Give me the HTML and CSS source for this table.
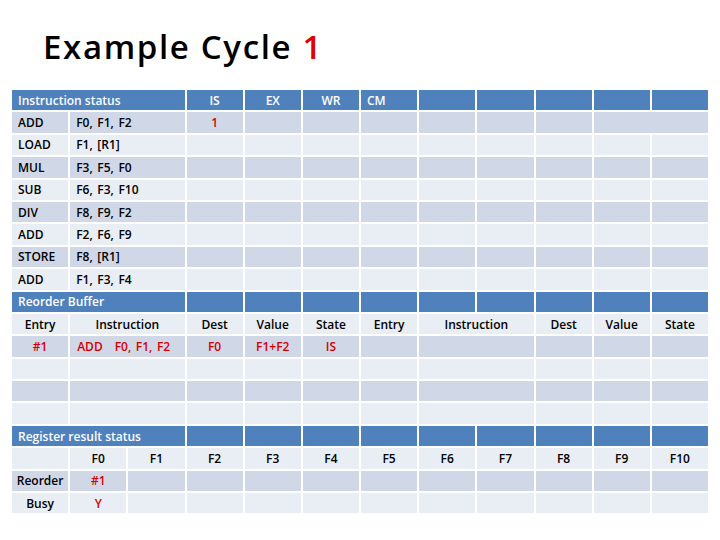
FILE: index.html
```html
<!DOCTYPE html>
<html>
<head>
<meta charset="utf-8">
<link rel="stylesheet" href="styles.css">
</head>
<body>
<div class="page">
  <h1 class="title">Example Cycle <span class="red-title">1</span></h1>
  <div class="grid">
    <!-- Instruction status header -->
    <div class="cell h s3">Instruction status</div>
    <div class="cell h c">IS</div>
    <div class="cell h c">EX</div>
    <div class="cell h c">WR</div>
    <div class="cell h">CM</div>
    <div class="cell h"></div><div class="cell h"></div><div class="cell h"></div><div class="cell h"></div><div class="cell h"></div>

    <!-- row 1 -->
    <div class="cell d">ADD</div><div class="cell d s2">F0, F1, F2</div>
    <div class="cell d c red">1</div><div class="cell d"></div><div class="cell d"></div><div class="cell d"></div>
    <div class="cell d"></div><div class="cell d"></div><div class="cell d"></div><div class="cell d s2"></div>

    <div class="cell l">LOAD</div><div class="cell l s2">F1, [R1]</div>
    <div class="cell l"></div><div class="cell l"></div><div class="cell l"></div><div class="cell l"></div>
    <div class="cell l"></div><div class="cell l"></div><div class="cell l"></div><div class="cell l"></div><div class="cell l"></div>

    <div class="cell d">MUL</div><div class="cell d s2">F3, F5, F0</div>
    <div class="cell d"></div><div class="cell d"></div><div class="cell d"></div><div class="cell d"></div>
    <div class="cell d"></div><div class="cell d"></div><div class="cell d"></div><div class="cell d"></div><div class="cell d"></div>

    <div class="cell l">SUB</div><div class="cell l s2">F6, F3, F10</div>
    <div class="cell l"></div><div class="cell l"></div><div class="cell l"></div><div class="cell l"></div>
    <div class="cell l"></div><div class="cell l"></div><div class="cell l"></div><div class="cell l"></div><div class="cell l"></div>

    <div class="cell d">DIV</div><div class="cell d s2">F8, F9, F2</div>
    <div class="cell d"></div><div class="cell d"></div><div class="cell d"></div><div class="cell d"></div>
    <div class="cell d"></div><div class="cell d"></div><div class="cell d"></div><div class="cell d"></div><div class="cell d"></div>

    <div class="cell l">ADD</div><div class="cell l s2">F2, F6, F9</div>
    <div class="cell l"></div><div class="cell l"></div><div class="cell l"></div><div class="cell l"></div>
    <div class="cell l"></div><div class="cell l"></div><div class="cell l"></div><div class="cell l"></div><div class="cell l"></div>

    <div class="cell d">STORE</div><div class="cell d s2">F8, [R1]</div>
    <div class="cell d"></div><div class="cell d"></div><div class="cell d"></div><div class="cell d"></div>
    <div class="cell d"></div><div class="cell d"></div><div class="cell d"></div><div class="cell d"></div><div class="cell d"></div>

    <div class="cell l">ADD</div><div class="cell l s2">F1, F3, F4</div>
    <div class="cell l"></div><div class="cell l"></div><div class="cell l"></div><div class="cell l"></div>
    <div class="cell l"></div><div class="cell l"></div><div class="cell l"></div><div class="cell l"></div><div class="cell l"></div>

    <!-- Reorder buffer -->
    <div class="cell h s3">Reorder Buffer</div>
    <div class="cell h"></div><div class="cell h"></div><div class="cell h"></div><div class="cell h"></div>
    <div class="cell h"></div><div class="cell h"></div><div class="cell h"></div><div class="cell h"></div><div class="cell h"></div>

    <div class="cell l c">Entry</div><div class="cell l c s2">Instruction</div>
    <div class="cell l c">Dest</div><div class="cell l c">Value</div><div class="cell l c">State</div>
    <div class="cell l c">Entry</div><div class="cell l c s2">Instruction</div>
    <div class="cell l c">Dest</div><div class="cell l c">Value</div><div class="cell l c">State</div>

    <div class="cell d c red">#1</div><div class="cell d s2 red rob-inst"><span class="op">ADD</span>F0, F1, F2</div>
    <div class="cell d c red">F0</div><div class="cell d c red">F1+F2</div><div class="cell d c red">IS</div>
    <div class="cell d"></div><div class="cell d s2"></div><div class="cell d"></div><div class="cell d"></div><div class="cell d"></div>

    <div class="cell l"></div><div class="cell l s2"></div><div class="cell l"></div><div class="cell l"></div><div class="cell l"></div>
    <div class="cell l"></div><div class="cell l s2"></div><div class="cell l"></div><div class="cell l"></div><div class="cell l"></div>

    <div class="cell d"></div><div class="cell d s2"></div><div class="cell d"></div><div class="cell d"></div><div class="cell d"></div>
    <div class="cell d"></div><div class="cell d s2"></div><div class="cell d"></div><div class="cell d"></div><div class="cell d"></div>

    <div class="cell l"></div><div class="cell l s2"></div><div class="cell l"></div><div class="cell l"></div><div class="cell l"></div>
    <div class="cell l"></div><div class="cell l s2"></div><div class="cell l"></div><div class="cell l"></div><div class="cell l"></div>

    <!-- Register result status -->
    <div class="cell h s3">Register result status</div>
    <div class="cell h"></div><div class="cell h"></div><div class="cell h"></div><div class="cell h"></div>
    <div class="cell h"></div><div class="cell h"></div><div class="cell h"></div><div class="cell h"></div><div class="cell h"></div>

    <div class="cell l"></div>
    <div class="cell l c">F0</div><div class="cell l c">F1</div><div class="cell l c">F2</div><div class="cell l c">F3</div>
    <div class="cell l c">F4</div><div class="cell l c">F5</div><div class="cell l c">F6</div><div class="cell l c">F7</div>
    <div class="cell l c">F8</div><div class="cell l c">F9</div><div class="cell l c">F10</div>

    <div class="cell d c">Reorder</div><div class="cell d c red">#1</div>
    <div class="cell d"></div><div class="cell d"></div><div class="cell d"></div><div class="cell d"></div><div class="cell d"></div>
    <div class="cell d"></div><div class="cell d"></div><div class="cell d"></div><div class="cell d"></div><div class="cell d"></div>

    <div class="cell l c">Busy</div><div class="cell l c red">Y</div>
    <div class="cell l"></div><div class="cell l"></div><div class="cell l"></div><div class="cell l"></div><div class="cell l"></div>
    <div class="cell l"></div><div class="cell l"></div><div class="cell l"></div><div class="cell l"></div><div class="cell l"></div>
  </div>
</div>
</body>
</html>
```

FILE: styles.css
```css
html, body {
  margin: 0;
  padding: 0;
  background: #ffffff;
}

.page {
  width: 720px;
  height: 540px;
  padding: 22px 12px 0 12px;
  box-sizing: border-box;
  font-family: "Open Sans", "Noto Sans", sans-serif;
}

.title {
  margin: 0 0 0 31px;
  height: 68px;
  font-size: 33px;
  font-weight: 600;
  line-height: 50px;
  color: #000000;
  letter-spacing: 1.65px;
}

.red-title {
  color: #e00000;
}

.grid {
  display: grid;
  grid-template-columns: repeat(12, 1fr);
  grid-auto-rows: 20.4px;
  gap: 2px;
  width: 696px;
}

.cell {
  display: flex;
  align-items: center;
  padding: 0 6px;
  font-size: 12px;
  font-weight: 600;
  color: #000000;
  white-space: nowrap;
  overflow: hidden;
  word-spacing: 1.5px;
}

.h {
  background: #4f81bd;
  color: #ffffff;
  word-spacing: 0;
}

.d {
  background: #d0d8e8;
}

.l {
  background: #e9edf4;
}

.c {
  justify-content: center;
  padding: 0;
}

.s2 {
  grid-column: span 2;
}

.s3 {
  grid-column: span 3;
}

.red {
  color: #d40000;
}

.rob-inst {
  padding-left: 7px;
}

.op {
  margin-right: 12px;
}
```
